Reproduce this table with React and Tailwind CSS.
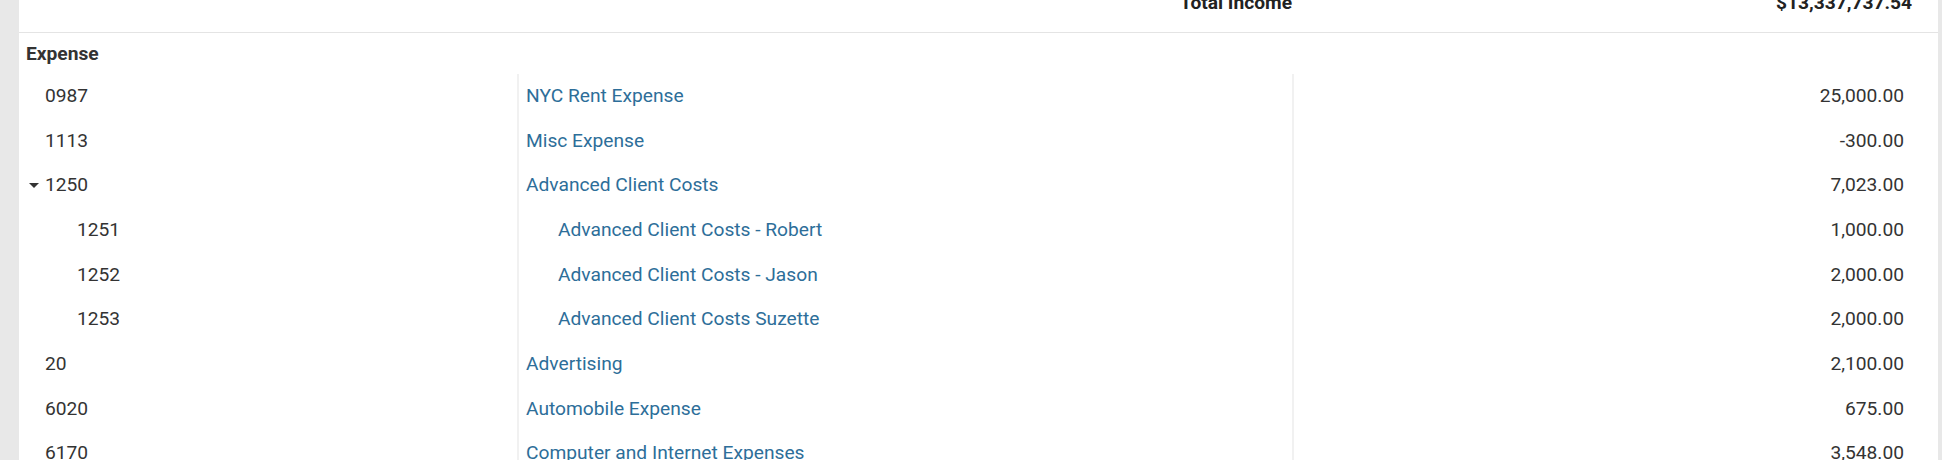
import React from "react";

const rows = [
  { code: "0987", name: "NYC Rent Expense", amt: "25,000.00" },
  { code: "1113", name: "Misc Expense", amt: "-300.00" },
  { code: "1250", name: "Advanced Client Costs", amt: "7,023.00", open: true },
  { code: "1251", name: "Advanced Client Costs - Robert", amt: "1,000.00", child: true },
  { code: "1252", name: "Advanced Client Costs - Jason", amt: "2,000.00", child: true },
  { code: "1253", name: "Advanced Client Costs Suzette", amt: "2,000.00", child: true },
  { code: "20", name: "Advertising", amt: "2,100.00" },
  { code: "6020", name: "Automobile Expense", amt: "675.00" },
  { code: "6170", name: "Computer and Internet Expenses", amt: "3,548.00" },
];

function Row({ r }) {
  return (
    <div className="grid grid-cols-[498px_775px_1fr] h-[44.67px] shrink-0">
      <div className={`flex items-center ${r.child ? "pl-[42px]" : "pl-[10px]"}`}>
        <span className="w-[16px] flex items-center">
          {r.open && (
            <svg width="10" height="7" viewBox="0 0 10 7">
              <path d="M0 1H10L5 6Z" fill="#333333" />
            </svg>
          )}
        </span>
        <span>{r.code}</span>
      </div>
      <div
        className={`flex items-center border-l-2 border-[#f1f1f1] text-[#2d6e99] ${
          r.child ? "pl-[39px]" : "pl-[7px]"
        }`}
      >
        {r.name}
      </div>
      <div className="flex items-center justify-end border-l-2 border-[#f1f1f1] pr-[34px]">
        {r.amt}
      </div>
    </div>
  );
}

export default function App() {
  return (
    <div className="w-[1942px] h-[460px] overflow-hidden flex bg-white font-['Roboto',sans-serif] text-[19.2px] text-[#333333]">
      <div className="w-[19px] shrink-0 bg-[#e8e8e8]" />
      <div className="flex-1 min-w-0 flex flex-col">
        <div className="h-[33px] shrink-0 border-b border-[#e4e4e4] overflow-hidden">
          <div className="grid grid-cols-[498px_775px_1fr] mt-[-7.5px] leading-[20px] font-bold text-[#222222]">
            <div />
            <div className="text-right">Total Income</div>
            <div className="text-right pr-[26px]">$13,337,737.54</div>
          </div>
        </div>
        <div className="h-[41px] shrink-0 flex items-center pl-[7px] pt-[1px] font-bold">
          Expense
        </div>
        {rows.map((r) => (
          <Row key={r.code} r={r} />
        ))}
      </div>
      <div className="w-[4px] shrink-0 bg-[#e8e8e8]" />
    </div>
  );
}
